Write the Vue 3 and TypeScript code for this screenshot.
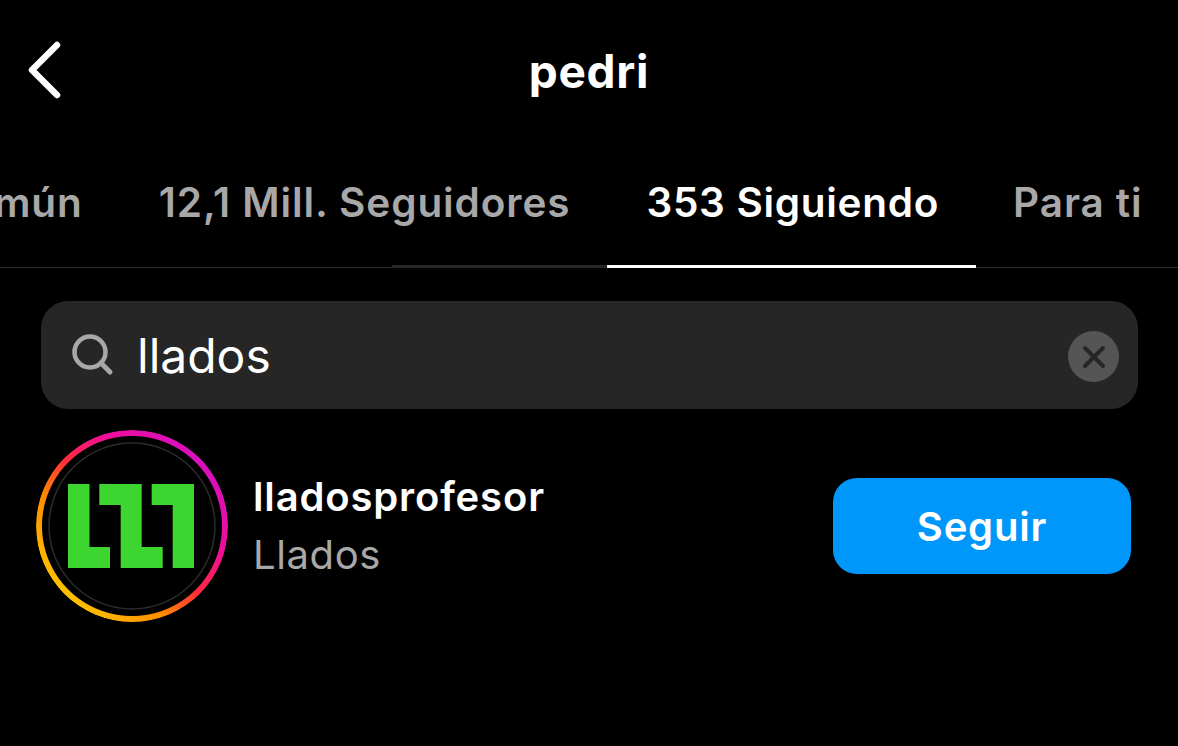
<script setup lang="ts">
const tabs = [
  { label: "mún", cls: "first" },
  { label: "12,1 Mill. Seguidores", cls: "fading" },
  { label: "353 Siguiendo", cls: "active" },
  { label: "Para ti", cls: "" },
];
</script>

<template>
  <div class="screen">
    <header class="top">
      <svg class="back" width="40" height="62" viewBox="0 0 40 62" fill="none">
        <path d="M31 5 L6 30 L31 55" stroke="#fff" stroke-width="6.5" stroke-linecap="round" stroke-linejoin="round" />
      </svg>
      <h1>pedri</h1>
    </header>

    <nav class="tabs">
      <div v-for="tab in tabs" :key="tab.label" class="tab" :class="tab.cls">{{ tab.label }}</div>
    </nav>

    <div class="search">
      <svg class="glass" width="42" height="42" viewBox="0 0 42 42" fill="none">
        <circle cx="18" cy="18" r="15.5" stroke="#a8a8a8" stroke-width="4.5" />
        <path d="M29 29 L38 38" stroke="#a8a8a8" stroke-width="5" stroke-linecap="round" />
      </svg>
      <span class="query">llados</span>
      <span class="clear">
        <svg width="24" height="24" viewBox="0 0 24 24" fill="none">
          <path d="M3 3 L21 21 M21 3 L3 21" stroke="#262626" stroke-width="4" stroke-linecap="round" />
        </svg>
      </span>
    </div>

    <div class="row">
      <div class="avatar">
        <div class="ring"></div>
        <svg class="logo" width="192" height="192" viewBox="0 0 192 192">
          <circle cx="96" cy="96" r="83" fill="none" stroke="#2c2c2c" stroke-width="1.5" />
          <path
            fill="#3dd52f"
            d="M32 54 H53.500 V117 H74 V138 H32 Z
               M63.300 54 H105.700 V117 H126.700 V138 H84.700 V75 H63.300 Z
               M115.700 54 H158 V138 H136.700 V75 H115.700 Z"
          />
        </svg>
      </div>
      <div class="names">
        <div class="user">lladosprofesor</div>
        <div class="full">Llados</div>
      </div>
      <button class="follow">Seguir</button>
    </div>
  </div>
</template>

<style scoped>
.screen {
  width: 1178px;
  height: 746px;
  background: #000;
  color: #fff;
  overflow: hidden;
  font-family: Inter, "Liberation Sans", sans-serif;
}

.top {
  height: 142px;
  display: flex;
  align-items: center;
  justify-content: center;
  position: relative;
}

.top h1 {
  margin: 0;
  font-size: 46px;
  font-weight: 700;
  letter-spacing: 0.7px;
}

.back {
  position: absolute;
  left: 26px;
  top: 40px;
}

.tabs {
  display: flex;
  height: 126px;
  box-sizing: border-box;
  border-bottom: 1px solid #2a2a2a;
}

.tab {
  padding: 36px 37px 0 39px;
  font-size: 40.5px;
  font-weight: 600;
  letter-spacing: 0.9px;
  color: #a8a8a8;
  white-space: nowrap;
  position: relative;
}

.tab.first {
  padding-left: 0;
  margin-left: -6px;
}

.tab.active {
  color: #fff;
  letter-spacing: 0.7px;
  margin-right: -2px;
}

.tab.active::after {
  content: "";
  position: absolute;
  left: 0;
  right: 0;
  bottom: -1px;
  height: 3px;
  background: #fff;
}

.tab.fading::after {
  content: "";
  position: absolute;
  width: 215px;
  right: 0;
  bottom: -1px;
  height: 3px;
  background: #262626;
}

.search {
  margin: 33px 40px 0 41px;
  height: 108px;
  background: #262626;
  border-radius: 27px;
  display: flex;
  align-items: center;
  padding: 0 19px 0 31px;
}

.glass {
  flex: none;
}

.query {
  margin-left: 23px;
  font-size: 48px;
  font-weight: 400;
  flex: 1;
}

.clear {
  width: 51px;
  height: 51px;
  margin-top: 3px;
  border-radius: 50%;
  background: #555;
  display: flex;
  align-items: center;
  justify-content: center;
}

.row {
  display: flex;
  align-items: center;
  margin-top: 21px;
  padding: 0 47px 0 36px;
}

.avatar {
  width: 192px;
  height: 192px;
  flex: none;
  position: relative;
}

.ring {
  position: absolute;
  inset: 0;
  border-radius: 50%;
  background: linear-gradient(45deg, #ffc800 12%, #ff8a00 35%, #ff2a3c 50%, #f00f96 66%, #d60fc4 88%);
  -webkit-mask: radial-gradient(circle, transparent 89.500px, #000 90.500px);
  mask: radial-gradient(circle, transparent 89.500px, #000 90.500px);
}

.logo {
  display: block;
  position: relative;
}

.names {
  margin-left: 25px;
  flex: 1;
}

.user {
  font-size: 40px;
  font-weight: 600;
  letter-spacing: 0.85px;
  line-height: 46px;
}

.full {
  margin-top: 12px;
  font-size: 40px;
  letter-spacing: 0.6px;
  line-height: 46px;
  color: #a8a8a8;
}

.follow {
  width: 298px;
  height: 96px;
  border: 0;
  border-radius: 24px;
  background: #0097fb;
  color: #fff;
  font-family: inherit;
  font-size: 40px;
  font-weight: 600;
  letter-spacing: 0.8px;
}
</style>
